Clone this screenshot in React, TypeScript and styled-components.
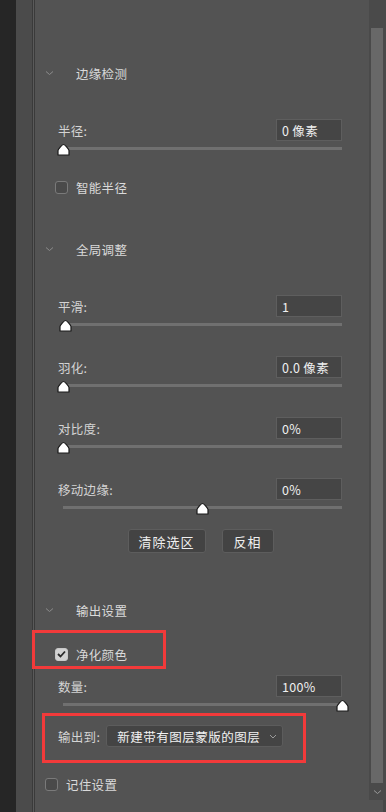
import React from 'react';
import styled, { createGlobalStyle } from 'styled-components';

const GlobalStyle = createGlobalStyle`
  html, body {
    margin: 0;
    padding: 0;
    background: #262626;
  }
  body {
    font-family: "Noto Sans CJK SC", "Noto Sans", sans-serif;
  }
`;

const Screen = styled.div`
  display: flex;
  width: 386px;
  height: 812px;
  overflow: hidden;
  background: #262626;
`;

const DarkStrip = styled.div`
  width: 16px;
  flex-shrink: 0;
  background: #262626;
`;

const SideGutter = styled.div`
  width: 16px;
  flex-shrink: 0;
  background: #4b4b4b;
`;

const EdgeLines = styled.div`
  width: 3px;
  flex-shrink: 0;
  background: linear-gradient(to right, #3a3a3a 0 1px, #5a5a5a 1px 2px, #3a3a3a 2px 3px);
`;

const Panel = styled.div`
  flex: 1;
  display: flex;
  flex-direction: column;
  padding: 63px 27px 0 0;
  background: #535353;
  color: #d6d6d6;
  font-size: 12.5px;
  letter-spacing: 0.3px;
`;

const SectionHeader = styled.div<{ $top: number }>`
  display: flex;
  align-items: center;
  height: 20px;
  margin-top: ${(p) => p.$top}px;
  padding-left: 10px;
  color: #dadada;
`;

const Chevron = styled.svg`
  width: 9px;
  height: 6px;
  margin-right: 22px;
`;

const Group = styled.div<{ $top: number }>`
  display: flex;
  flex-direction: column;
  margin-top: ${(p) => p.$top}px;
  padding-left: 23px;
`;

const LabelRow = styled.div`
  display: flex;
  align-items: center;
  justify-content: space-between;
  height: 22px;
`;

const Label = styled.span`
  color: #d4d4d4;
  white-space: nowrap;
`;

const ValueBox = styled.div`
  box-sizing: border-box;
  width: 66px;
  height: 22px;
  padding-left: 5px;
  display: flex;
  align-items: center;
  background: #454545;
  border: 1px solid #5e5e5e;
  color: #f0f0f0;
  white-space: nowrap;
`;

const SliderWrap = styled.div`
  position: relative;
  height: 12px;
  margin: 3px 0 0 5px;
  width: 279px;
`;

const Track = styled.div`
  position: absolute;
  left: 0;
  right: 0;
  top: 3px;
  height: 3px;
  background: #707070;
`;

const Thumb = styled.svg`
  position: absolute;
  top: -1px;
  width: 13px;
  height: 13px;
  margin-left: -6.5px;
`;

const CheckRow = styled.label<{ $top: number; $left: number }>`
  display: flex;
  align-items: center;
  gap: 8px;
  height: 14px;
  margin-top: ${(p) => p.$top}px;
  padding-left: ${(p) => p.$left}px;
  color: #dadada;
  white-space: nowrap;
`;

const Box = styled.span<{ $checked?: boolean }>`
  box-sizing: border-box;
  width: 13px;
  height: 13px;
  border-radius: 3px;
  border: 1px solid ${(p) => (p.$checked ? '#c8c8c8' : '#7a7a7a')};
  background: ${(p) => (p.$checked ? '#d2d2d2' : '#4a4a4a')};
  display: flex;
  align-items: center;
  justify-content: center;
`;

const ButtonRow = styled.div`
  display: flex;
  justify-content: center;
  gap: 16px;
  margin: 14px 0 0 24px;
`;

const Button = styled.div<{ $w: number }>`
  box-sizing: border-box;
  width: ${(p) => p.$w}px;
  height: 24px;
  display: flex;
  align-items: center;
  justify-content: center;
  background: #434343;
  border: 1px solid #5d5d5d;
  border-radius: 3px;
  color: #f0f0f0;
  font-size: 13px;
  letter-spacing: 1px;
`;

const Highlight = styled.div<{ $top: number; $left: number; $w: number; $h: number }>`
  box-sizing: border-box;
  width: ${(p) => p.$w}px;
  height: ${(p) => p.$h}px;
  margin: ${(p) => p.$top}px 0 0 ${(p) => p.$left}px;
  border: 3px solid #f23a3a;
`;

const HighlightInner = styled.div<{ $pt: number; $pl: number }>`
  display: flex;
  align-items: center;
  padding: ${(p) => p.$pt}px 0 0 ${(p) => p.$pl}px;
  gap: 6px;
`;

const Select = styled.div`
  box-sizing: border-box;
  width: 177px;
  height: 22px;
  flex-shrink: 0;
  display: flex;
  align-items: center;
  justify-content: space-between;
  padding: 0 5px 0 10px;
  background: #444444;
  border: 1px solid #5c5c5c;
  border-radius: 3px;
  color: #f2f2f2;
`;

const SelectText = styled.span`
  white-space: nowrap;
  font-size: 12.5px;
  letter-spacing: 0.5px;
`;

const SelectArrow = styled.svg`
  flex-shrink: 0;
  width: 8px;
  height: 5px;
`;

const Scrollbar = styled.div`
  width: 17px;
  flex-shrink: 0;
  display: flex;
  flex-direction: column;
  background: #4a4a4a;
`;

const ScrollTop = styled.div`
  height: 28px;
`;

const ScrollThumb = styled.div`
  flex: 1;
  margin: 0 3px 0 2px;
  background: #686868;
`;

const ScrollArrow = styled.div`
  height: 17px;
  display: flex;
  align-items: center;
  justify-content: center;
`;

const ScrollFoot = styled.div`
  height: 12px;
  background: #535353;
  border-right: 3px solid #474747;
`;

const ChevronDown = ({ color = '#8c8c8c' }: { color?: string }) => (
  <Chevron viewBox="0 0 9 6">
    <path d="M1 1.5 L4.5 4.5 L8 1.5" fill="none" stroke={color} strokeWidth="1" />
  </Chevron>
);

const Slider = ({ value }: { value: number }) => (
  <SliderWrap>
    <Track />
    <Thumb viewBox="0 0 13 13" style={{ left: `${value}%` }}>
      <path
        d="M1 12 V7.5 C1 6.5 5 1.5 6.5 1.5 C8 1.5 12 6.5 12 7.5 V12 Z"
        fill="#ffffff"
        stroke="#1a1a1a"
        strokeWidth="1.2"
        strokeLinejoin="round"
      />
    </Thumb>
  </SliderWrap>
);

const Control = ({ label, value, pos, top }: { label: string; value: string; pos: number; top: number }) => (
  <Group $top={top}>
    <LabelRow>
      <Label>{label}</Label>
      <ValueBox>{value}</ValueBox>
    </LabelRow>
    <Slider value={pos} />
  </Group>
);

const Tick = () => (
  <svg width="9" height="8" viewBox="0 0 9 8">
    <path d="M1 4 L3.5 6.5 L8 1.5" fill="none" stroke="#2a2a2a" strokeWidth="1.8" />
  </svg>
);

export default function App() {
  return (
    <>
      <GlobalStyle />
      <Screen>
        <DarkStrip />
        <SideGutter />
        <EdgeLines />
        <Panel>
          <SectionHeader $top={0}>
            <ChevronDown />
            边缘检测
          </SectionHeader>
          <Control label="半径:" value="0 像素" pos={0} top={36} />
          <CheckRow $top={24} $left={20}>
            <Box />
            智能半径
          </CheckRow>

          <SectionHeader $top={45}>
            <ChevronDown />
            全局调整
          </SectionHeader>
          <Control label="平滑:" value="1" pos={1} top={36} />
          <Control label="羽化:" value="0.0 像素" pos={0} top={24} />
          <Control label="对比度:" value="0%" pos={0} top={24} />
          <Control label="移动边缘:" value="0%" pos={50} top={24} />
          <ButtonRow>
            <Button $w={78}>清除选区</Button>
            <Button $w={52}>反相</Button>
          </ButtonRow>

          <SectionHeader $top={47}>
            <ChevronDown />
            输出设置
          </SectionHeader>
          <Highlight $top={10} $left={-3} $w={134} $h={39}>
            <HighlightInner $pt={14} $pl={20}>
              <CheckRow $top={0} $left={0}>
                <Box $checked>
                  <Tick />
                </Box>
                净化颜色
              </CheckRow>
            </HighlightInner>
          </Highlight>
          <Control label="数量:" value="100%" pos={100} top={6} />
          <Highlight $top={1} $left={7} $w={264} $h={50}>
            <HighlightInner $pt={9} $pl={13}>
              <Label>输出到:</Label>
              <Select>
                <SelectText>新建带有图层蒙版的图层</SelectText>
                <SelectArrow viewBox="0 0 8 5">
                  <path d="M1 1 L4 4 L7 1" fill="none" stroke="#9a9a9a" strokeWidth="1" />
                </SelectArrow>
              </Select>
            </HighlightInner>
          </Highlight>
          <CheckRow $top={14} $left={10}>
            <Box />
            记住设置
          </CheckRow>
        </Panel>
        <Scrollbar>
          <ScrollTop />
          <ScrollThumb />
          <ScrollArrow>
            <svg width="9" height="6" viewBox="0 0 9 6">
              <path d="M1 1.5 L4.5 4.5 L8 1.5" fill="none" stroke="#9a9a9a" strokeWidth="1" />
            </svg>
          </ScrollArrow>
          <ScrollFoot />
        </Scrollbar>
      </Screen>
    </>
  );
}
